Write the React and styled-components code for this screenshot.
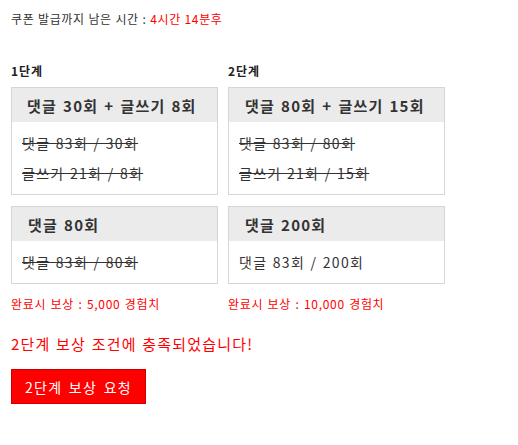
import React from "react";
import styled, { createGlobalStyle } from "styled-components";

const Global = createGlobalStyle`
  body {
    margin: 0;
    background: #fff;
    font-family: "Noto Sans CJK KR", "Noto Sans", sans-serif;
    color: #333;
  }
`;

const Page = styled.div`
  padding: 10px 11px;
`;

const Timer = styled.p`
  margin: 0;
  font-size: 12px;
  line-height: 18px;
  letter-spacing: 0.6px;
  word-spacing: 0.5px;
  color: #333;

  span {
    color: #f00;
  }
`;

const Stages = styled.div`
  display: flex;
  gap: 10px;
  margin-top: 35px;
`;

const Stage = styled.div`
  width: ${(p) => p.$width}px;
  display: flex;
  flex-direction: column;
`;

const StageLabel = styled.h4`
  margin: 0 0 8px;
  font-size: 12px;
  line-height: 16px;
  font-weight: 700;
  letter-spacing: 1px;
  color: #222;
`;

const Card = styled.div`
  border: 1px solid #d6d6d6;
  margin-bottom: 11px;
`;

const CardHead = styled.div`
  background: #ebebeb;
  height: 34px;
  display: flex;
  align-items: center;
  padding-left: ${(p) => p.$pad}px;
  font-size: 15px;
  font-weight: 700;
  letter-spacing: 1.2px;
  word-spacing: 1.5px;
  color: #333;
`;

const CardBody = styled.div`
  padding: 6px 10px;
  display: flex;
  flex-direction: column;
`;

const Line = styled.div`
  font-size: 14px;
  line-height: 30px;
  letter-spacing: 1.3px;
  word-spacing: 1px;
  color: #333;
  text-decoration: ${(p) => (p.$done ? "line-through" : "none")};
`;

const Reward = styled.p`
  margin: 1px 0 0;
  font-size: 12px;
  line-height: 16px;
  letter-spacing: 0.7px;
  word-spacing: 1px;
  color: #f00;
`;

const Notice = styled.p`
  margin: 22px 0 0;
  font-size: 15px;
  line-height: 20px;
  letter-spacing: 1.2px;
  word-spacing: 1px;
  color: #f00;
`;

const RequestButton = styled.button`
  margin-top: 15px;
  width: 135px;
  height: 35px;
  background: #f00;
  border: 1px solid #c00;
  color: #fff;
  font-family: inherit;
  font-size: 14px;
  letter-spacing: 1.3px;
  word-spacing: 2px;
  padding: 0;
  cursor: pointer;
`;

const stages = [
  {
    label: "1단계",
    width: 207,
    reward: "5,000",
    cards: [
      {
        title: "댓글 30회 + 글쓰기 8회",
        pad: 15,
        lines: [
          { text: "댓글 83회 / 30회", done: true },
          { text: "글쓰기 21회 / 8회", done: true },
        ],
      },
      {
        title: "댓글 80회",
        pad: 16,
        lines: [{ text: "댓글 83회 / 80회", done: true }],
      },
    ],
  },
  {
    label: "2단계",
    width: 217,
    reward: "10,000",
    cards: [
      {
        title: "댓글 80회 + 글쓰기 15회",
        pad: 16,
        lines: [
          { text: "댓글 83회 / 80회", done: true },
          { text: "글쓰기 21회 / 15회", done: true },
        ],
      },
      {
        title: "댓글 200회",
        pad: 16,
        lines: [{ text: "댓글 83회 / 200회", done: false }],
      },
    ],
  },
];

export default function App() {
  return (
    <Page>
      <Global />
      <Timer>
        쿠폰 발급까지 남은 시간 : <span>4시간 14분후</span>
      </Timer>

      <Stages>
        {stages.map((s) => (
          <Stage key={s.label} $width={s.width}>
            <StageLabel>{s.label}</StageLabel>
            {s.cards.map((c) => (
              <Card key={c.title}>
                <CardHead $pad={c.pad}>{c.title}</CardHead>
                <CardBody>
                  {c.lines.map((l) => (
                    <Line key={l.text} $done={l.done}>
                      {l.text}
                    </Line>
                  ))}
                </CardBody>
              </Card>
            ))}
            <Reward>완료시 보상 : {s.reward} 경험치</Reward>
          </Stage>
        ))}
      </Stages>

      <Notice>2단계 보상 조건에 충족되었습니다!</Notice>
      <RequestButton>2단계 보상 요청</RequestButton>
    </Page>
  );
}
